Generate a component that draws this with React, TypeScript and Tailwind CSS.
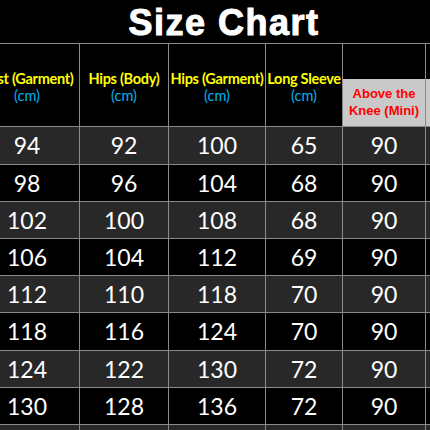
import React from "react";

type Row = { bust: number; hipsBody: number; hipsGarment: number; sleeve: number; mini: number };

const rows: Row[] = [
  { bust: 94, hipsBody: 92, hipsGarment: 100, sleeve: 65, mini: 90 },
  { bust: 98, hipsBody: 96, hipsGarment: 104, sleeve: 68, mini: 90 },
  { bust: 102, hipsBody: 100, hipsGarment: 108, sleeve: 68, mini: 90 },
  { bust: 106, hipsBody: 104, hipsGarment: 112, sleeve: 69, mini: 90 },
  { bust: 112, hipsBody: 110, hipsGarment: 118, sleeve: 70, mini: 90 },
  { bust: 118, hipsBody: 116, hipsGarment: 124, sleeve: 70, mini: 90 },
  { bust: 124, hipsBody: 122, hipsGarment: 130, sleeve: 72, mini: 90 },
  { bust: 130, hipsBody: 128, hipsGarment: 136, sleeve: 72, mini: 90 },
];

// row heights so the grid lines land where the chart has them
const rowH = ["h-[38px]", "h-[37px]", "h-[37px]", "h-[37px]", "h-[37px]", "h-[38px]", "h-[37px]", "h-[37px]"];

const cols = ["w-[105px]", "w-[89px]", "w-[97px]", "w-[77px]", "w-[83px]", "w-[100px]"];

const cell = "flex shrink-0 items-center justify-center border-r border-[#8a8a8a]";

function HeadLabel({ title }: { title: string }) {
  return (
    <div className="flex flex-col items-center leading-[17px]">
      <span className="whitespace-nowrap text-[14.5px] font-bold tracking-[-0.3px] text-[#ffff00]">{title}</span>
      <span className="text-[14.5px] text-[#00b0f0]">(cm)</span>
    </div>
  );
}

export default function App() {
  return (
    <div className="h-[430px] w-[430px] overflow-hidden bg-black font-[family-name:Lato,sans-serif]">
      <div className="flex h-[43px] items-center justify-center pl-[18px] pt-[3px]">
        <h1 className="font-[family-name:'Liberation_Sans',Arial,sans-serif] text-[36px] font-bold leading-none tracking-[1.5px] text-white [-webkit-text-stroke:1px_white]">
          Size Chart
        </h1>
      </div>

      <div className="ml-[-25px] w-[560px]">
        <div className="flex h-[84px] border-y border-[#8a8a8a]">
          <div className={`${cell} ${cols[0]} pt-[4px]`}>
            <HeadLabel title="Bust (Garment)" />
          </div>
          <div className={`${cell} ${cols[1]} pt-[4px]`}>
            <HeadLabel title="Hips (Body)" />
          </div>
          <div className={`${cell} ${cols[2]} pt-[4px]`}>
            <HeadLabel title="Hips (Garment)" />
          </div>
          <div className={`${cell} ${cols[3]} pt-[4px]`}>
            <HeadLabel title="Long Sleeve" />
          </div>
          <div className={`flex shrink-0 flex-col justify-end border-r border-[#8a8a8a] ${cols[4]}`}>
            <div className="flex h-[47px] flex-col items-center justify-center bg-[#c9c9c9] font-[family-name:'Liberation_Sans',Arial,sans-serif] text-[13px] font-bold leading-[16.5px] text-[#ff0000]">
              <span>Above the</span>
              <span>Knee (Mini)</span>
            </div>
          </div>
          <div className={`flex shrink-0 flex-col justify-end ${cols[5]}`}>
            <div className="h-[47px] bg-[#c9c9c9]" />
          </div>
        </div>

        {rows.map((r, i) => (
          <div
            key={r.bust}
            className={`flex border-b border-[#8a8a8a] text-[23px] text-white ${rowH[i]} ${
              i % 2 === 0 ? "bg-[#282828]" : "bg-black"
            }`}
          >
            <div className={`${cell} ${cols[0]}`}>{r.bust}</div>
            <div className={`${cell} ${cols[1]}`}>{r.hipsBody}</div>
            <div className={`${cell} ${cols[2]}`}>{r.hipsGarment}</div>
            <div className={`${cell} ${cols[3]}`}>{r.sleeve}</div>
            <div className={`${cell} ${cols[4]}`}>{r.mini}</div>
            <div className={`${cell} ${cols[5]}`}></div>
          </div>
        ))}
        <div className="flex h-[37px] bg-[#282828]">
          {cols.map((c) => (
            <div key={c} className={`${cell} ${c}`} />
          ))}
        </div>
      </div>
    </div>
  );
}
